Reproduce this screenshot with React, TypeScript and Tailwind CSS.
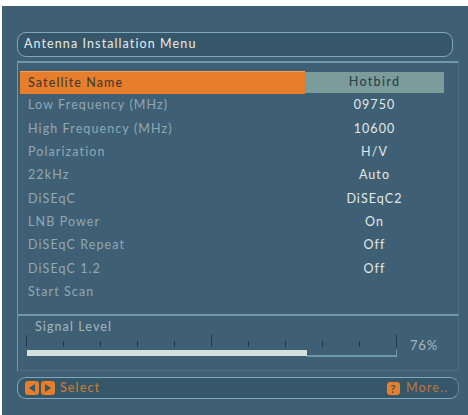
const rows = [
  ['Low Frequency (MHz)', '09750'],
  ['High Frequency (MHz)', '10600'],
  ['Polarization', 'H/V'],
  ['22kHz', 'Auto'],
  ['DiSEqC', 'DiSEqC2'],
  ['LNB Power', 'On'],
  ['DiSEqC Repeat', 'Off'],
  ['DiSEqC 1.2', 'Off'],
  ['Start Scan', ''],
];

const font = { fontFamily: '"Lato", "Noto Sans", sans-serif' };

export default function App() {
  return (
    <div className="w-[468px] h-[415px] bg-white pt-[6px] pl-[2px] overflow-hidden" style={font}>
      <div className="w-[466px] h-[409px] bg-[#3f6074] pt-[26px] pl-[15px] flex flex-col">
        {/* title */}
        <div className="w-[436px] h-[25px] rounded-[9px] border border-[#7fa9bb] bg-[#365669] pl-[6px] flex items-center text-[12.5px] font-normal tracking-[1.1px] text-[#e4ecee]">
          Antenna Installation Menu
        </div>

        {/* main panel */}
        <div className="w-[442px] h-[253px] mt-[4px] border-t-2 border-l border-r border-t-[#6f98aa] border-l-[#6f98aa] border-r-[#4c6e82] pt-[8px] pl-[2px] flex flex-col">
          <div className="flex items-center h-[23px] w-[424px]">
            <div className="w-[285px] h-[23px] bg-[#e67e2c] border-t border-[#f0a060] pl-[8px] flex items-center text-[12.5px] font-medium tracking-[1.1px] text-[#4a3a2c]">
              Satellite Name
            </div>
            <div className="w-[139px] h-[21px] bg-[#7b9c9b] flex items-center justify-center text-[12.5px] font-medium tracking-[1.3px] text-[#2c4148]">
              Hotbird
            </div>
          </div>
          {rows.map(([label, value]) => (
            <div key={label} className="flex items-center h-[23.33px] w-[424px] text-[12.5px] font-normal tracking-[1.1px]">
              <div className="w-[285px] pl-[8px] text-[#90a8b4]">{label}</div>
              <div className="w-[139px] text-center text-[#e0e8ea]">{value}</div>
            </div>
          ))}
        </div>

        {/* signal */}
        <div className="w-[442px] h-[57px] border-t-2 border-l border-r border-b border-t-[#6f98aa] border-l-[#6f98aa] border-r-[#4c6e82] border-b-[#4c6e82] pl-[8px]">
          <div className="pl-[9px] pt-[3px] text-[12.5px] font-normal tracking-[1.1px] text-[#a3b7c1] leading-[16px]">Signal Level</div>
          <div className="flex items-start">
            <div className="w-[371px]">
              <div className="flex justify-between items-end h-[12px] w-[371px]">
                {[12, 6, 6, 6, 6, 12, 6, 6, 6, 6, 12].map((h, i) => (
                  <div key={i} className="w-px bg-[#20384a]" style={{ height: h }} />
                ))}
              </div>
              <div className="mt-[3px] h-[7px] w-[371px] pl-[1px] flex items-stretch">
                <div className="w-[280px] h-[6px] bg-[#d3e0dc]" />
                <div className="w-[90px] h-[7px] border-b-2 border-r border-[#6f98aa]" />
              </div>
            </div>
            <div className="ml-[13px] mt-[1px] text-[13px] font-normal tracking-[0.8px] text-[#a3b7c1]">76%</div>
          </div>
        </div>

        {/* footer */}
        <div className="w-[442px] h-[22px] mt-[6px] rounded-[9px] border border-[#7fa9bb] border-r-[#5d8497] bg-[#365669] pl-[7px] pr-[10px] flex items-center justify-between text-[12.5px] font-medium tracking-[1.1px]">
          <div className="flex items-center gap-[2px] text-[#c97a34]">
            <span className="w-[14px] h-[14px] rounded-[3px] bg-[#e67e2c] flex items-center justify-center">
              <svg width="8" height="10" viewBox="0 0 8 10"><path d="M7 1v8L1 5z" fill="#365669" /></svg>
            </span>
            <span className="w-[14px] h-[14px] rounded-[3px] bg-[#e67e2c] flex items-center justify-center">
              <svg width="8" height="10" viewBox="0 0 8 10"><path d="M1 1v8l6-4z" fill="#365669" /></svg>
            </span>
            <span className="ml-[3px]">Select</span>
          </div>
          <div className="flex items-center gap-[6px] text-[#b4763b]">
            <span className="w-[13px] h-[13px] rounded-[3px] bg-[#e67e2c] flex items-center justify-center text-[11px] font-bold text-[#365669] leading-none">?</span>
            <span>More..</span>
          </div>
        </div>
      </div>
    </div>
  );
}
